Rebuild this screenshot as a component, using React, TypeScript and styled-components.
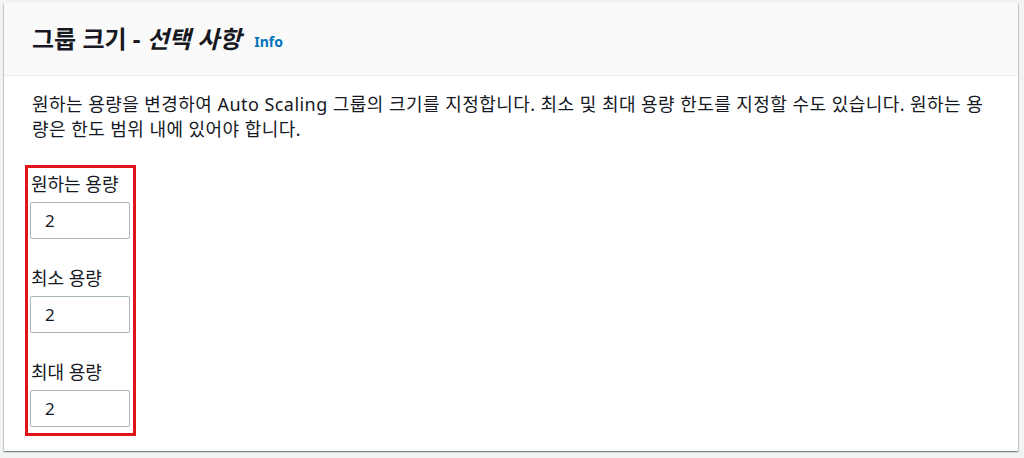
import styled, { createGlobalStyle } from "styled-components";

const GlobalStyle = createGlobalStyle`
  html, body {
    margin: 0;
    padding: 0;
    background: #f2f3f3;
  }
  body {
    font-family: "Noto Sans", "Noto Sans CJK KR", sans-serif;
    color: #16191f;
  }
`;

const Page = styled.div`
  padding: 3px 6px 6px 4px;
`;

const Card = styled.section`
  background: #ffffff;
  box-shadow: 0 1px 1px 0 rgba(0, 28, 36, 0.3), 1px 1px 1px 0 rgba(0, 28, 36, 0.15),
    -1px 1px 1px 0 rgba(0, 28, 36, 0.15);
`;

const Header = styled.header`
  height: 72px;
  display: flex;
  align-items: center;
  padding: 0 28px;
  background: #fafafa;
  border-bottom: 1px solid #eaeded;
`;

const Title = styled.h2`
  margin: 0;
  font-size: 24px;
  font-weight: 700;
  line-height: 30px;
  color: #16191f;
`;

const Optional = styled.em`
  font-style: italic;
`;

const InfoLink = styled.a`
  margin-left: 13px;
  font-size: 14px;
  font-weight: 700;
  color: #0073bb;
  text-decoration: none;
  position: relative;
  top: 2px;
`;

const Body = styled.div`
  padding: 16px 28px 15px;
`;

const Description = styled.p`
  margin: 0 0 23px;
  font-size: 18px;
  line-height: 25px;
  letter-spacing: 0.45px;
`;

const Highlight = styled.div`
  display: inline-flex;
  flex-direction: column;
  gap: 28px;
  margin-left: -7px;
  padding: 5px 3px 6px 2px;
  border: 3px solid #e1141c;
`;

const Field = styled.label`
  display: flex;
  flex-direction: column;
  gap: 7px;
`;

const FieldLabel = styled.span`
  padding-left: 1px;
  font-size: 18px;
  line-height: 22px;
`;

const NumberInput = styled.input`
  box-sizing: border-box;
  width: 100px;
  height: 37px;
  padding: 0 14px;
  border: 1px solid #aab7b8;
  border-radius: 2px;
  background: #ffffff;
  font-family: inherit;
  font-size: 17px;
  color: #16191f;
  outline: none;
`;

const fields = [
  { label: "원하는 용량", value: "2" },
  { label: "최소 용량", value: "2" },
  { label: "최대 용량", value: "2" },
];

export default function App() {
  return (
    <Page>
      <GlobalStyle />
      <Card>
        <Header>
          <Title>
            그룹 크기 - <Optional>선택 사항</Optional>
          </Title>
          <InfoLink href="#">Info</InfoLink>
        </Header>
        <Body>
          <Description>
            원하는 용량을 변경하여 Auto Scaling 그룹의 크기를 지정합니다. 최소 및 최대 용량 한도를
            지정할 수도 있습니다. 원하는 용량은 한도 범위 내에 있어야 합니다.
          </Description>
          <Highlight>
            {fields.map((f) => (
              <Field key={f.label}>
                <FieldLabel>{f.label}</FieldLabel>
                <NumberInput type="text" defaultValue={f.value} readOnly />
              </Field>
            ))}
          </Highlight>
        </Body>
      </Card>
    </Page>
  );
}
